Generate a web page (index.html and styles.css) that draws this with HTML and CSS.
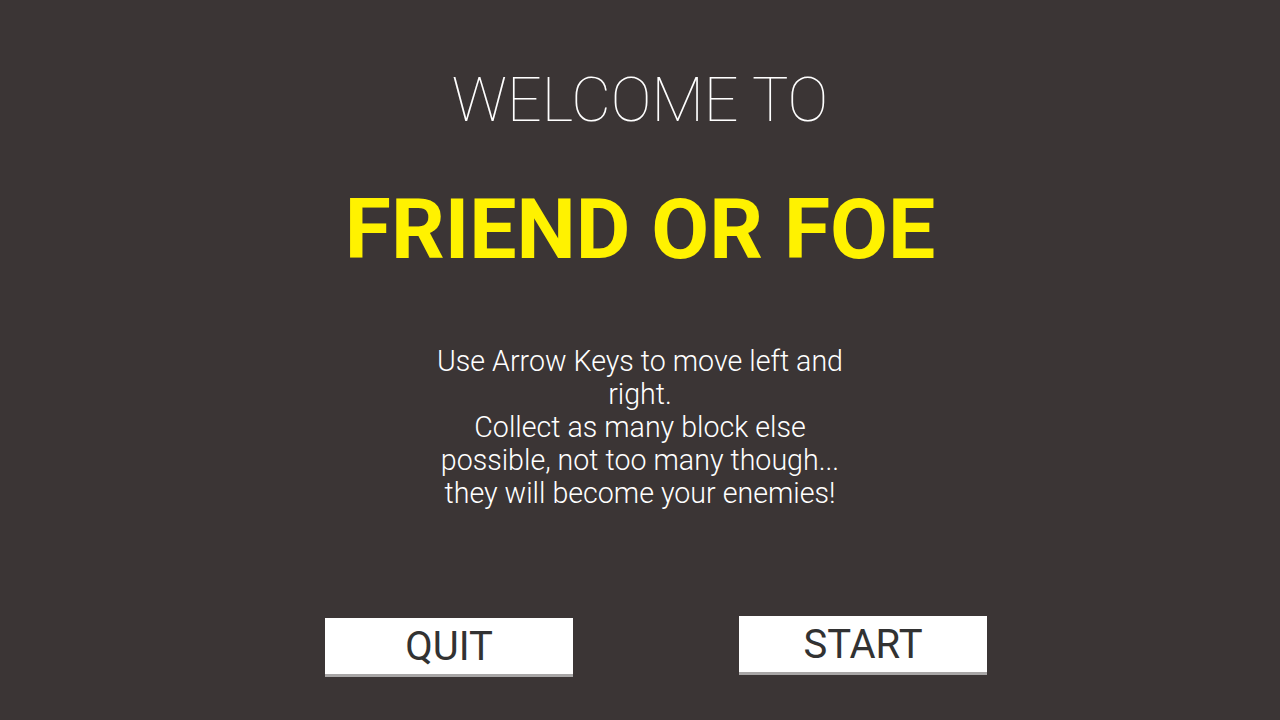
FILE: index.html
```html
<!DOCTYPE html>
<html>
<head>
<meta charset="utf-8">
<link rel="stylesheet" href="styles.css">
</head>
<body>
<main class="screen">
  <h2 class="welcome">WELCOME TO</h2>
  <h1 class="title">FRIEND OR FOE</h1>
  <p class="instructions">Use Arrow Keys to move left and right.<br>Collect as many block else possible, not too many though... they will become your enemies!</p>
  <div class="actions">
    <button class="btn btn-quit">QUIT</button>
    <button class="btn btn-start">START</button>
  </div>
</main>
</body>
</html>
```
FILE: styles.css
```css
html, body {
  margin: 0;
  padding: 0;
  width: 1280px;
  height: 720px;
  background: #3b3535;
  overflow: hidden;
}
.screen {
  display: flex;
  flex-direction: column;
  align-items: center;
  font-family: Roboto, "Liberation Sans", sans-serif;
  padding-top: 70px;
}
.welcome {
  margin: 0;
  font-weight: 100;
  font-size: 61px;
  line-height: 61px;
  color: #ffffff;
}
.title {
  margin: 57px 0 0;
  font-weight: 700;
  font-size: 84px;
  line-height: 84px;
  color: #fff200;
}
.instructions {
  margin: 73px 0 0;
  width: 430px;
  text-align: center;
  font-weight: 300;
  font-size: 28.6px;
  line-height: 33px;
  color: #ffffff;
}
.actions {
  display: flex;
  gap: 166px;
  margin-top: 106px;
  padding-left: 32px;
  align-items: flex-start;
}
.btn {
  width: 248px;
  height: 56px;
  border: none;
  padding: 0;
  background: #ffffff;
  box-shadow: 0 3px 0 #a8a6a6;
  font-family: Roboto, "Liberation Sans", sans-serif;
  font-weight: 400;
  font-size: 40px;
  color: #323232;
}
.btn-quit {
  margin-top: 2px;
}
```
